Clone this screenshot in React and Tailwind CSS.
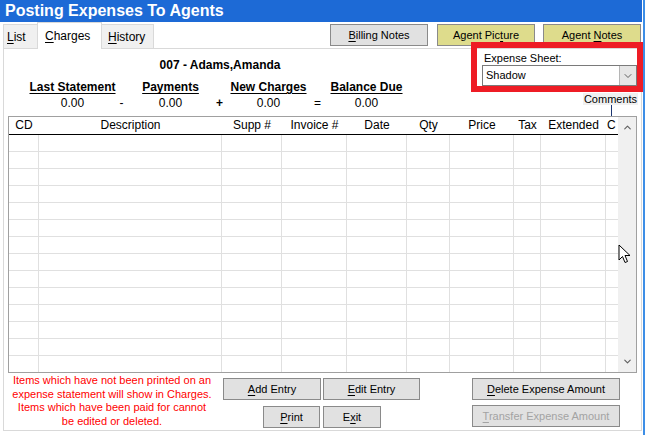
import React from 'react';
import { ChevronDown, ChevronUp } from 'lucide-react';

// Column layout of the charges grid (widths include the 1px right rule)
const columns = [
  { label: 'CD', w: 'w-[30px]' },
  { label: 'Description', w: 'w-[183px]' },
  { label: 'Supp #', w: 'w-[60px]' },
  { label: 'Invoice #', w: 'w-[65px]' },
  { label: 'Date', w: 'w-[60px]' },
  { label: 'Qty', w: 'w-[43px]' },
  { label: 'Price', w: 'w-[64px]' },
  { label: 'Tax', w: 'w-[27px]' },
  { label: 'Extended', w: 'w-[65px]' },
];

const rows = Array.from({ length: 14 }, (_, i) => i);

const Btn = ({ children, className = '', disabled = false }) => (
  <div
    className={`h-[22px] flex items-center justify-center border border-[#8a8a8a] text-[11px] whitespace-nowrap ${
      disabled ? 'text-[#a3a3a3]' : 'text-black'
    } ${className}`}
  >
    <span>{children}</span>
  </div>
);

const U = ({ children }) => <span className="underline underline-offset-[2px]">{children}</span>;

const SummaryLabel = ({ children }) => (
  <div className="w-[49px] flex justify-center whitespace-nowrap font-bold underline underline-offset-[2px]">{children}</div>
);

const SummaryCell = ({ children }) => (
  <div className="w-[49px] flex justify-center whitespace-nowrap">{children}</div>
);

export default function App() {
  return (
    <div
      className="relative w-[648px] h-[435px] bg-white flex overflow-hidden text-black"
      style={{ fontFamily: '"Liberation Sans", Arial, sans-serif' }}
    >
      <div className="w-[642px] flex flex-col">
        {/* --- Title bar --- */}
        <div className="h-[22px] bg-[#1d6ad6] pl-[5px] text-white text-[16px] font-bold leading-[22px] whitespace-nowrap">
          Posting Expenses To Agents
        </div>

        {/* --- Tabs + top buttons --- */}
        <div className="h-[26px] flex items-end">
          <div className="ml-[3px] w-[34px] h-[24px] border-l border-t border-[#d9d9d9] bg-[#f0f0f0] pl-[3px] flex items-center text-[12px]">
            <span><U>L</U>ist</span>
          </div>
          <div className="relative z-10 -mb-px w-[65px] h-[27px] border-l border-t border-r border-[#d9d9d9] bg-white pl-[7px] flex items-center text-[12px]">
            <span><U>C</U>harges</span>
          </div>
          <div className="w-[52px] h-[24px] border-t border-r border-[#d9d9d9] bg-[#f0f0f0] pl-[6px] flex items-center text-[12px]">
            <span><U>H</U>istory</span>
          </div>
          <div className="ml-auto mr-px self-start mt-[2px] flex">
            <Btn className="w-[98px] bg-[#e1e1e1]">
              <U>B</U>illing Notes
            </Btn>
            <Btn className="ml-[9px] w-[98px] bg-[#dedc8c]">
              Agent Pic<U>t</U>ure
            </Btn>
            <Btn className="ml-[8px] w-[98px] bg-[#dedc8c]">
              Agent <U>N</U>otes
            </Btn>
          </div>
        </div>

        {/* --- Tab panel --- */}
        <div className="ml-[3px] w-[639px] h-[383px] border border-[#d9d9d9] flex flex-col">
          {/* header area */}
          <div className="h-[67px] flex">
            <div className="w-[432px] flex flex-col text-[12px]">
              <div className="mt-[9px] h-[14px] leading-[14px] text-center font-bold">007 - Adams,Amanda</div>
              <div className="mt-[8px] h-[14px] leading-[14px] pl-[44px] flex">
                <SummaryLabel>Last Statement</SummaryLabel>
                <SummaryCell />
                <SummaryLabel>Payments</SummaryLabel>
                <SummaryCell />
                <SummaryLabel>New Charges</SummaryLabel>
                <SummaryCell />
                <SummaryLabel>Balance Due</SummaryLabel>
              </div>
              <div className="mt-[2px] h-[14px] leading-[14px] pl-[44px] flex">
                <SummaryCell>0.00</SummaryCell>
                <SummaryCell>-</SummaryCell>
                <SummaryCell>0.00</SummaryCell>
                <SummaryCell><span className="font-bold">+</span></SummaryCell>
                <SummaryCell>0.00</SummaryCell>
                <SummaryCell>=</SummaryCell>
                <SummaryCell>0.00</SummaryCell>
              </div>
            </div>

            <div className="ml-[46px] w-[155px] flex flex-col text-[11px]">
              <div className="mt-[2px] h-[14px] leading-[14px] pl-[2px]">Expense Sheet:</div>
              <div className="h-[21px] border border-[#7a7a7a] flex items-center">
                <div className="flex-1 pl-[3px]">Shadow</div>
                <div className="w-[17px] h-[19px] border-l border-[#b5b5b5] bg-[#e6e6e6] flex items-center justify-center">
                  <ChevronDown size={12} strokeWidth={1.5} color="#333" />
                </div>
              </div>
              <div className="mt-[7px] ml-auto w-[55px] h-[12px] leading-[12px] bg-[#f0f0f0] text-center text-[11px] -mr-px">
                Comments
              </div>
              <div className="ml-[129px] w-px h-[11px] bg-[#1c3670]" />
            </div>
          </div>

          {/* grid */}
          <div className="ml-[4px] w-[629px] h-[257px] border border-[#a0a0a0] flex overflow-hidden">
            <div className="w-[609px] flex flex-col overflow-hidden">
              <div className="h-[18px] shrink-0 border-b border-black flex text-[12px] leading-[17px]">
                {columns.map((c) => (
                  <div key={c.label} className={`${c.w} shrink-0 text-center whitespace-nowrap`}>
                    {c.label}
                  </div>
                ))}
                <div className="w-[12px] shrink-0 pl-px overflow-hidden">C</div>
              </div>
              {rows.map((r) => (
                <div key={r} className="h-[17px] shrink-0 border-b border-[#e0e0e0] flex">
                  {columns.map((c) => (
                    <div key={c.label} className={`${c.w} shrink-0 border-r border-[#e0e0e0]`} />
                  ))}
                  <div className="w-[12px] shrink-0" />
                </div>
              ))}
            </div>
            <div className="w-[18px] bg-[#f0f0f0] flex flex-col items-center justify-between py-[5px]">
              <ChevronUp size={11} strokeWidth={2.5} color="#606060" />
              <ChevronDown size={11} strokeWidth={2.5} color="#606060" />
            </div>
          </div>

          {/* bottom controls */}
          <div className="flex-1 flex">
            <div className="ml-[4px] w-[208px] pt-[1px] text-[11px] leading-[13.7px] text-center text-[#ff0000] whitespace-nowrap">
              Items which have not been printed on an
              <br />
              expense statement will show in Charges.
              <br />
              Items which have been paid for cannot
              <br />
              be edited or deleted.
            </div>
            <div className="ml-[7px] pt-[5px] flex flex-col">
              <div className="flex">
                <Btn className="w-[98px] bg-[#e1e1e1]">
                  <U>A</U>dd Entry
                </Btn>
                <Btn className="ml-[2px] w-[97px] bg-[#e1e1e1]">
                  <U>E</U>dit Entry
                </Btn>
              </div>
              <div className="mt-[6px] ml-[40px] flex">
                <Btn className="w-[57px] bg-[#e1e1e1]">
                  <U>P</U>rint
                </Btn>
                <Btn className="ml-[3px] w-[58px] bg-[#e1e1e1]">
                  E<U>x</U>it
                </Btn>
              </div>
            </div>
            <div className="ml-[52px] pt-[5px] flex flex-col">
              <Btn className="w-[148px] bg-[#e1e1e1]">
                <U>D</U>elete Expense Amount
              </Btn>
              <Btn className="mt-[5px] w-[148px] bg-[#e1e1e1]" disabled>
                <U>T</U>ransfer Expense Amount
              </Btn>
            </div>
          </div>
        </div>
      </div>

      {/* window frame edge */}
      <div className="ml-px w-[2px] h-full bg-[#3d8ee6]" />

      {/* highlight box around the expense sheet picker */}
      <div className="absolute left-[471px] top-[42px] w-[172px] h-[50px] border-[6px] border-[#ee1c25]" />

      {/* mouse pointer */}
      <svg className="absolute left-[618px] top-[244px]" width="13" height="20" viewBox="0 0 13 20">
        <path d="M1 1 L1 16 L4.5 12.5 L7 18.5 L9.5 17.5 L7 11.5 L12 11.5 Z" fill="white" stroke="black" strokeWidth="1" strokeLinejoin="miter" />
      </svg>
    </div>
  );
}
